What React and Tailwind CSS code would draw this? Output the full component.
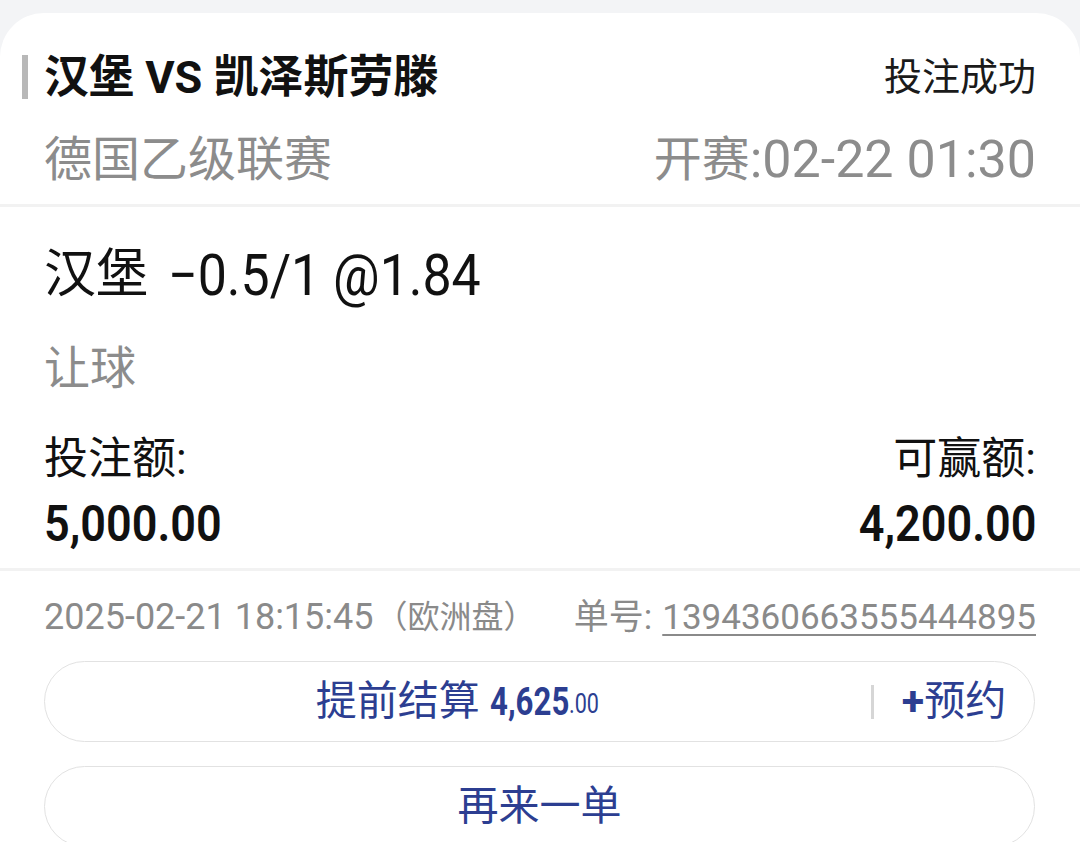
import React from "react";

const SANS = "font-['Roboto','Noto_Sans_CJK_SC',sans-serif]";

export default function App() {
  return (
    <div className={`min-h-[842px] bg-[#f3f4f6] pt-[13px] ${SANS}`}>
      <div className="bg-white rounded-t-[44px] overflow-hidden min-h-[829px]">
        {/* Header */}
        <div className="px-[44px] pt-[42px] pb-[20px]">
          <div className="flex items-center justify-between h-[44px]">
            <div className="flex items-center">
              <div className="-ml-[22px] mr-[16px] w-[6px] h-[44px] bg-[#b8b8b8]" />
              <span className="text-[45px] leading-none font-bold text-[#111] whitespace-nowrap">
                汉堡 VS 凯泽斯劳滕
              </span>
            </div>
            <span className="text-[38px] leading-none text-[#1a1a1a]">投注成功</span>
          </div>
          <div className="mt-[37px] flex items-center justify-between h-[48px] text-[#8c8c8c]">
            <span className="text-[48px] leading-none">德国乙级联赛</span>
            <span className="flex items-center leading-none whitespace-nowrap">
              <span className="text-[48px]">开赛</span>
              <span className="text-[52px]">:02-22 01:30</span>
            </span>
          </div>
        </div>
        <div className="h-[3px] bg-[#f2f2f2]" />

        {/* Bet detail */}
        <div className="px-[44px] pb-[19px]">
          <div className="mt-[40px] h-[56px] flex items-center text-[#111] whitespace-nowrap">
            <span className="text-[52px] leading-none">汉堡</span>
            <span className="ml-[20px] inline-block origin-left scale-x-[0.91] text-[57px] leading-none">
              −0.5/1 @1.84
            </span>
          </div>
          <div className="mt-[41px] h-[48px] flex items-center text-[46px] leading-none text-[#8c8c8c]">
            让球
          </div>
          <div className="mt-[44px] flex items-start justify-between text-[#111]">
            <div className="flex flex-col items-start">
              <div className="h-[46px] flex items-center text-[44px] leading-none">投注额:</div>
              <div className="mt-[17px] h-[50px] flex items-center">
                <span className="inline-block origin-left scale-x-[0.9] text-[50px] leading-none font-semibold">
                  5,000.00
                </span>
              </div>
            </div>
            <div className="flex flex-col items-end">
              <div className="h-[46px] flex items-center text-[44px] leading-none">可赢额:</div>
              <div className="mt-[17px] h-[50px] flex items-center">
                <span className="inline-block origin-right scale-x-[0.9] text-[50px] leading-none font-semibold">
                  4,200.00
                </span>
              </div>
            </div>
          </div>
        </div>
        <div className="h-[3px] bg-[#f2f2f2]" />

        {/* Footer */}
        <div className="px-[44px]">
          <div className="mt-[26px] h-[40px] flex items-center justify-between text-[#8a8a8a]">
            <span className="flex items-center whitespace-nowrap">
              <span className="text-[36px] leading-none">2025-02-21 18:15:45</span>
              <span className="ml-[2px] text-[32px] leading-none">（欧洲盘）</span>
            </span>
            <span className="flex items-center whitespace-nowrap">
              <span className="text-[35px] leading-none">单号: </span>
              <span className="ml-[10px] text-[35px] leading-none underline decoration-2 underline-offset-[5px]">
                1394360663555444895
              </span>
            </span>
          </div>
        </div>
        <div className="pl-[44px] pr-[45px]">
          <div className="mt-[24px] h-[81px] rounded-full border-[1.5px] border-[#e2e2e2] flex items-center text-[#2c3e91]">
            <div className="flex-1 flex items-end justify-center">
              <span className="text-[41px] leading-none">提前结算</span>
              <span className="ml-[10px] -mr-[20px] inline-block origin-left scale-x-[0.8] text-[39px] leading-none font-bold">
                4,625
              </span>
              <span className="-mr-[6px] mb-[4px] inline-block origin-left scale-x-[0.8] text-[27px] leading-none">
                .00
              </span>
            </div>
            <div className="w-[3px] h-[34px] bg-[#d6d6d6]" />
            <div className="w-[160px] flex items-center justify-center">
              <span className="text-[41px] leading-none">
                <span className="font-bold">+</span>预约
              </span>
            </div>
          </div>
          <div className="mt-[24px] h-[81px] rounded-full border-[1.5px] border-[#e2e2e2] flex items-center justify-center text-[#2c3e91]">
            <span className="text-[41px] leading-none">再来一单</span>
          </div>
        </div>
      </div>
    </div>
  );
}
